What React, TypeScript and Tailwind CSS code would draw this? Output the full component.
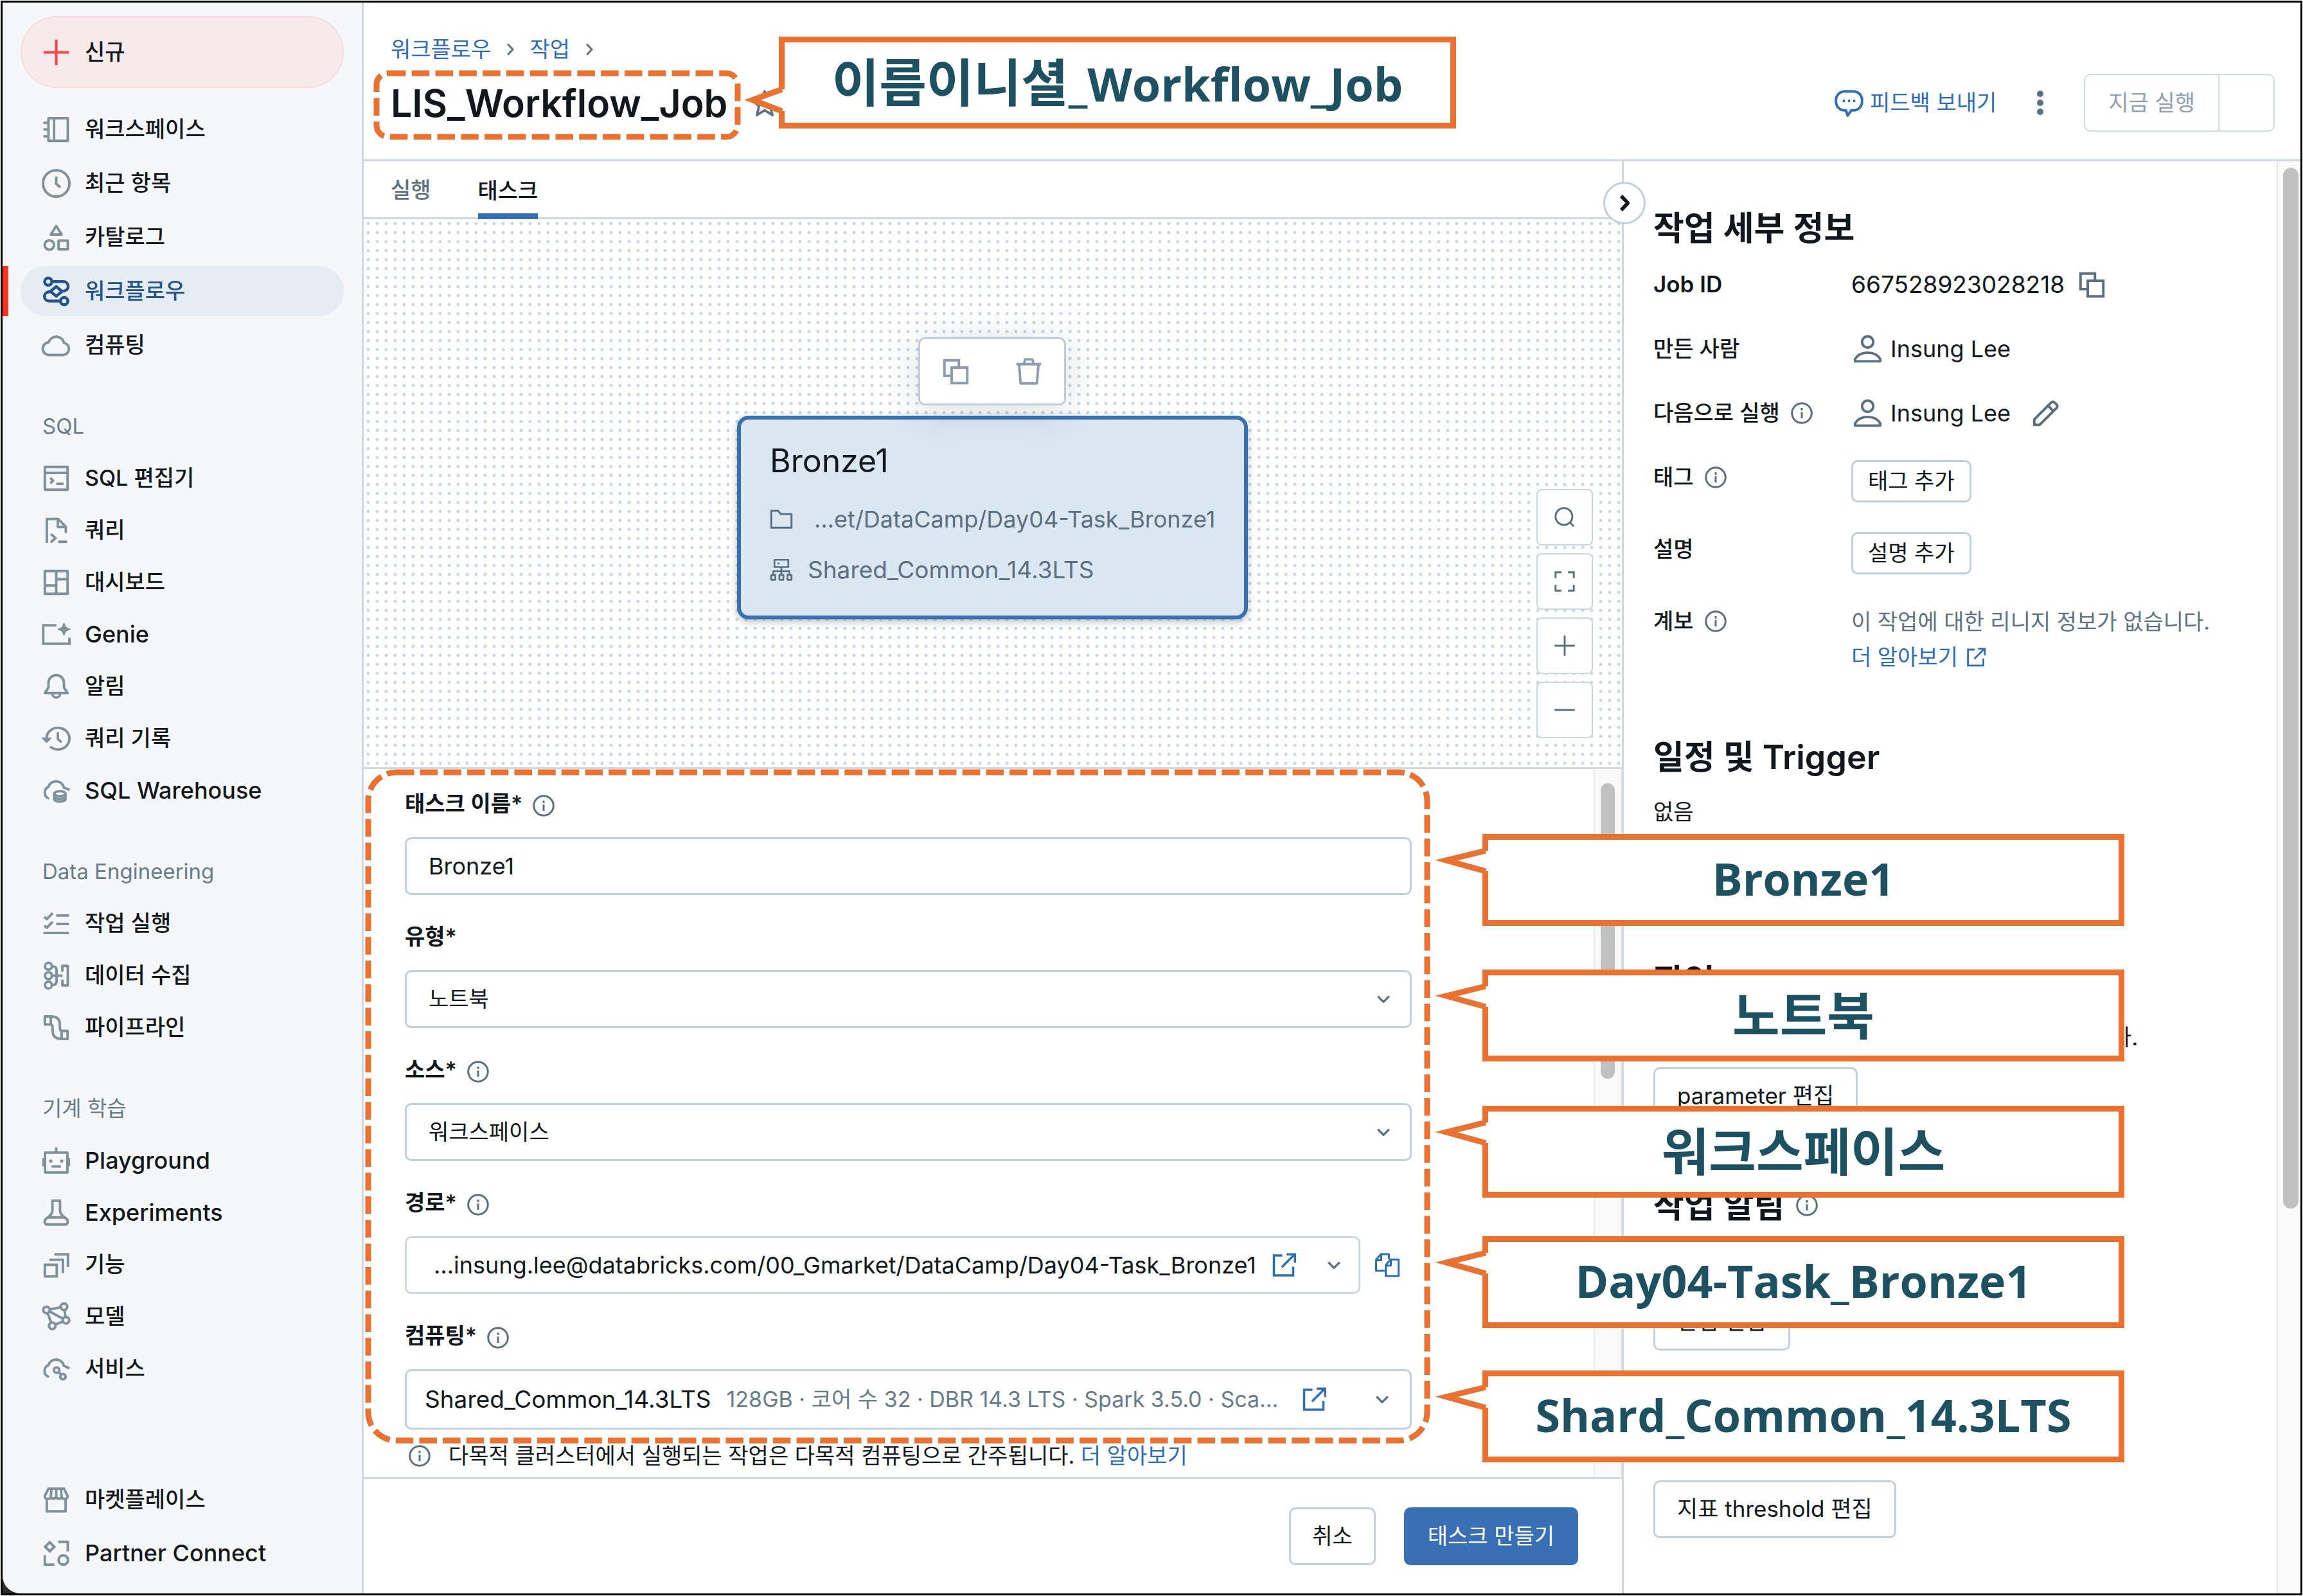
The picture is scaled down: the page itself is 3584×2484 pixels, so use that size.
import React from "react";

type IconProps = { children: React.ReactNode; className?: string; width?: number };

function Icon({ children, className = "size-[45px]", width = 1.4 }: IconProps) {
  return (
    <svg
      viewBox="0 0 16 16"
      fill="none"
      stroke="currentColor"
      strokeWidth={width}
      strokeLinejoin="round"
      aria-hidden="true"
      className={`${className} shrink-0 overflow-visible`}
    >
      {children}
    </svg>
  );
}

const icons = {
  notebook: (
    <>
      <path d="M3.7 1.8h10.7v12.5H3.7zM6.8 1.8v12.5M.9 4.3h2.8M.9 8h2.8M.9 11.8h2.8" />
    </>
  ),
  clock: (
    <>
      <circle cx="8" cy="8" r="7.3" />
      <path d="M8 4.2v4l2.3 2" />
    </>
  ),
  catalog: (
    <>
      <path d="M8 1.7 5 6.4h6zM9.3 9.8h5.1v4.8H9.3z" />
      <circle cx="4.2" cy="12.2" r="2.6" />
    </>
  ),
  workflow: (
    <g strokeWidth="1.6">
      <circle cx="3.6" cy="2.6" r="2" />
      <circle cx="12.4" cy="13.4" r="2" />
      <path d="M5.6 2.6h6.3a2.6 2.6 0 0 1 .8 5.1L11.2 8 8 10.7 4.8 8 8 5.3 11.2 8M4.8 8l-1.5.4a2.5 2.5 0 0 0 .8 4.9h6.3" />
    </g>
  ),
  cloud: <path d="M4.3 13.3a3.5 3.5 0 0 1-.5-7 4.4 4.4 0 0 1 8.5.3 3.4 3.4 0 0 1-.2 6.7z" />,
  editor: (
    <>
      <path d="M1.7 1.7h12.6v12.6H1.7zM1.7 5h12.6M8 11h4" />
      <path d="m4.7 7.8 1.6 1.5-1.6 1.5" />
    </>
  ),
  query: (
    <path d="M2.8 14.9V1.7h6.3L13.3 6v3.4M8.9 1.7v4.4h4.4M5 10l2.6 2.3L5 14.6M9.1 14.3h4.9" />
  ),
  dashboard: <path d="M1.7 1.7h12.6v12.6H1.7zM8 1.7v12.6M1.7 9.7H8M8 6.2h6.3" />,
  genie: (
    <>
      <path d="M8.1 2.9H.8v10.2h14.5V9.8" strokeLinejoin="miter" />
      <path
        d="M12.3 1.9c.5 2 1.2 2.7 3.2 3.2-2 .5-2.7 1.2-3.2 3.2-.5-2-1.2-2.7-3.2-3.2 2-.5 2.7-1.2 3.2-3.2z"
        fill="currentColor"
        strokeWidth=".7"
      />
    </>
  ),
  bell: (
    <path d="M1.7 11.6h12.6l-2-3V6a4.3 4.3 0 0 0-8.6 0v2.6zM5.9 11.9a2.1 2.2 0 0 0 4.2 0" />
  ),
  history: (
    <>
      <path d="M2.6 8a6.35 6 0 1 1 2 4.4M8.9 4.4v3.8l2 1.9" />
      <path d="M.2 7.7h5L2.7 10.1z" fill="currentColor" strokeWidth=".6" />
    </>
  ),
  warehouse: (
    <>
      <path d="M4 12.4a3.5 3.5 0 0 1-.3-6.5 4.4 4.4 0 0 1 8.5.4l3.2 1.3" />
      <ellipse cx="10" cy="9.7" rx="3.1" ry="1.4" />
      <path d="M6.9 9.7v3c0 .8 1.4 1.4 3.1 1.4s3.1-.6 3.1-1.4v-3M6.9 11.2c0 .8 1.4 1.4 3.1 1.4s3.1-.6 3.1-1.4" />
    </>
  ),
  checklist: (
    <path d="M8 3.5h7.1M8 8.2h7.1M.9 13.2h14.2M1.4 4.3l1.4 1.2L6 2.2M1.4 9.1l1.4 1.2L6 7" />
  ),
  ingest: (
    <>
      <circle cx="3.7" cy="2.8" r="1.9" />
      <circle cx="3.7" cy="8" r="1.9" />
      <circle cx="3.7" cy="13.2" r="1.9" />
      <path d="M5.6 2.8c1.9 0 2.6.8 2.6 2v6.4c0 1.2-.7 2-2.6 2M5.6 8h5.9M11.4 5.8V2.6h3v10.8h-3v-3.2" />
    </>
  ),
  pipeline: (
    <path d="M1.7 1.8H5v4.4H1.7zM11 9.8h3.3v4.4H11zM5 1.8c3.4 0 5 1.5 5 4.4 0 2.3 0 3.6 1.3 3.6M5 6.2c1 0 1 1.3 1 3.4 0 3 1.6 4.6 5 4.6" />
  ),
  robot: (
    <>
      <path d="M1.8 3.5h12.4v11H1.8zM8 .6v2.9M1 6.6v4.5M15 6.6v4.5M5.4 11.2h5.2" />
      <circle cx="5" cy="8.2" r=".5" fill="currentColor" strokeWidth=".9" />
      <circle cx="11" cy="8.2" r=".5" fill="currentColor" strokeWidth=".9" />
    </>
  ),
  flask: (
    <path d="M5.3 1.3h5.4M5.9 1.3v5.3c0 1-.6 2.3-1.5 3.1l-2.1 1.8c-1.4 1.2-.5 3 .8 3h9.8c1.3 0 2.2-1.8.8-3l-2.1-1.8c-.9-.8-1.5-2.1-1.5-3.1V1.3M3.6 10.6h8.8" />
  ),
  features: (
    <path d="M1.7 8h6.6v6.4H1.7zM4.2 5.2h7.5v7.4M7 2.2h7.5v7" strokeLinejoin="miter" />
  ),
  models: (
    <>
      <circle cx="2.6" cy="4.2" r="1.8" />
      <circle cx="12.3" cy="2.4" r="1.8" />
      <circle cx="13.4" cy="9.9" r="1.8" />
      <circle cx="5.8" cy="13" r="1.8" />
      <path d="m4.4 3.9 6.1-1.2M12.6 4.2l.5 3.9M11.6 10.6l-4.2 1.7M5.3 11.3 3.2 6M4.2 5l7.6 4.1" />
    </>
  ),
  serving: (
    <>
      <path d="M4 12.5a3.5 3.5 0 0 1-.3-6.6 4.4 4.4 0 0 1 8.5.4l3.2 1.4" />
      <circle cx="8.2" cy="8.7" r="1.5" />
      <circle cx="11.7" cy="12.3" r="1.5" />
      <path d="m9.3 9.8 1.3 1.4" />
    </>
  ),
  market: (
    <path d="M3.7 1.8h8.6l2 3.9v.7a1.8 1.8 0 0 1-3.3 0 1.7 1.7 0 0 1-3 0 1.7 1.7 0 0 1-3 0 1.8 1.8 0 0 1-3.3 0v-.7zM5.4 1.8 5 6.4M8 1.8v4.6M10.6 1.8l.4 4.6M2.8 8v6.3h10.4V8" />
  ),
  partner: (
    <>
      <path d="m4.4 1.9 2.5 2.5-2.5 2.5-2.5-2.5zM9.1 1.7h5.3v5.2M1.7 9v5.3H7" strokeLinejoin="miter" />
      <circle cx="11.9" cy="11.7" r="2.6" />
    </>
  ),
  copy: <path d="M9.7 5.2V1.7h-8v8.6h3.5M5.7 5.7h8.6v8.6H5.7z" strokeLinejoin="miter" />,
  trash: <path d="M1 3.9h14M5.3 3.9l.6-2.7h4.2l.6 2.7M2.5 3.9l.9 10.9h9.2l.9-10.9" />,
  user: (
    <>
      <circle cx="8" cy="4" r="3.1" />
      <path d="M1 14.7v-1.2c1.4-2.4 4-3.6 7-3.6s5.6 1.2 7 3.6v1.2z" />
    </>
  ),
  pencil: <path d="M1.7 14.3v-3l9.4-9.4a1.3 1.3 0 0 1 1.8 0l1.2 1.2a1.3 1.3 0 0 1 0 1.8l-9.4 9.4zM9.3 3.7l3 3" />,
  info: (
    <>
      <circle cx="8" cy="8" r="7.2" />
      <path d="M8 7.2v4.6M8 4.2v1.8" />
    </>
  ),
  external: <path d="M7 2H1.8v12.4h12V9M6.7 9.3l8-8M9.7 1.3h5.2v5.2" strokeLinejoin="miter" />,
  chevronDown: <path d="m3 5.5 5 5 5-5" />,
  chevronRight: <path d="m5.5 2.5 5.2 5.5-5.2 5.5" />,
  search: (
    <>
      <circle cx="7.5" cy="7.5" r="5.8" />
      <path d="m11.7 11.7 2.6 2.6" />
    </>
  ),
  fit: <path d="M1.7 5.7v-4h4M10.3 1.7h4v4M14.3 10.3v4h-4M5.7 14.3h-4v-4" strokeLinejoin="miter" />,
  plus: <path d="M8 1v14M1 8h14" />,
  minus: <path d="M1 8h14" />,
  folder: <path d="M1 2.2h4.8l1.7 2.3H15v9.4H1z" strokeLinejoin="miter" />,
  cluster: (
    <path d="M3.2 1h9.6v5H3.2zM8 6v2.8M2.4 11.5V8.8h11.2v2.7M8 8.8v2.7M1 11.5h2.8v3.3H1zM6.6 11.5h2.8v3.3H6.6zM12.2 11.5H15v3.3h-2.8zM5.5 3.5h1.2" />
  ),
  speech: (
    <>
      <path d="M7.2 14.9 6.3 12H5.6A4.8 4.8 0 0 1 .8 7.2v-.9a4.8 4.8 0 0 1 4.8-4.8h4.8a4.8 4.8 0 0 1 4.8 4.8v.9a4.8 4.8 0 0 1-4.8 4.8H9.3z" />
      <path d="M4.5 6.8h1.2M7.4 6.8h1.2M10.3 6.8h1.2" />
    </>
  ),
  copies: (
    <path d="M6.5 11.5H1V4.7l3-3.5h5v3M1.2 5h3V1.2M7 8l3-3.5h5v10.3H7zM7.2 8.3h3V4.5" />
  ),
};

type NavItem = { icon: keyof typeof icons; label: string; active?: boolean; latin?: boolean };

const topItems: NavItem[] = [
  { icon: "notebook", label: "워크스페이스" },
  { icon: "clock", label: "최근 항목" },
  { icon: "catalog", label: "카탈로그" },
  { icon: "workflow", label: "워크플로우", active: true },
  { icon: "cloud", label: "컴퓨팅" },
];

const sections: { title: string; items: NavItem[] }[] = [
  {
    title: "SQL",
    items: [
      { icon: "editor", label: "SQL 편집기" },
      { icon: "query", label: "쿼리" },
      { icon: "dashboard", label: "대시보드" },
      { icon: "genie", label: "Genie", latin: true },
      { icon: "bell", label: "알림" },
      { icon: "history", label: "쿼리 기록" },
      { icon: "warehouse", label: "SQL Warehouse", latin: true },
    ],
  },
  {
    title: "Data Engineering",
    items: [
      { icon: "checklist", label: "작업 실행" },
      { icon: "ingest", label: "데이터 수집" },
      { icon: "pipeline", label: "파이프라인" },
    ],
  },
  {
    title: "기계 학습",
    items: [
      { icon: "robot", label: "Playground", latin: true },
      { icon: "flask", label: "Experiments", latin: true },
      { icon: "features", label: "기능" },
      { icon: "models", label: "모델" },
      { icon: "serving", label: "서비스" },
    ],
  },
];

const bottomItems: NavItem[] = [
  { icon: "market", label: "마켓플레이스" },
  { icon: "partner", label: "Partner Connect", latin: true },
];

function NavLink({ icon, label, active, latin }: NavItem) {
  return (
    <li className="relative px-7">
      {active && <span className="absolute inset-y-0 left-0 w-[9px] bg-[#f03522]" />}
      <a
        href="#"
        className={
          active
            ? "flex h-[78px] items-center gap-[22px] rounded-full bg-[#e5ecf3] px-[33px] font-medium text-[#24528c]"
            : "flex h-[78px] items-center gap-[22px] rounded-full px-[33px] font-medium"
        }
      >
        <span className={active ? "" : "text-[#80919e]"}>
          <Icon>{icons[icon]}</Icon>
        </span>
        <span className={latin ? "text-[36px]" : ""}>{label}</span>
      </a>
    </li>
  );
}

function Sidebar() {
  return (
    <nav className="flex w-[562px] shrink-0 flex-col border-r-[3px] border-[#cfd8e3] bg-[#f6f7f9] pt-[21px] pb-6">
      <div className="px-7">
        <button className="flex h-28 w-full items-center gap-[22px] rounded-full border-2 border-[#f8dcde] bg-[#f7eaea] px-[31px] font-medium">
          <span className="text-[#f24848]">
            <Icon width={1.5}>{icons.plus}</Icon>
          </span>
          신규
        </button>
      </div>
      <ul className="mt-[25px] flex flex-col gap-1.5">
        {topItems.map((item) => (
          <NavLink key={item.label} {...item} />
        ))}
      </ul>
      {sections.map((section) => (
        <section key={section.title} className="mt-16">
          <h2 className="mb-[17px] flex h-12 items-center pl-[62px] text-[33px] text-[#667c8c]">
            {section.title}
          </h2>
          <ul className="flex flex-col gap-[3px]">
            {section.items.map((item) => (
              <NavLink key={item.label} {...item} />
            ))}
          </ul>
        </section>
      ))}
      <ul className="mt-auto flex flex-col gap-[5px]">
        {bottomItems.map((item) => (
          <NavLink key={item.label} {...item} />
        ))}
      </ul>
    </nav>
  );
}

function Header() {
  return (
    <header className="flex h-[247px] shrink-0 items-center justify-between border-b-[3px] border-[#cfd8e3] pr-10 pl-[42px]">
      <div className="pt-1">
        <div className="flex h-12 items-center gap-[18px] text-[#2f6db5]">
          <a href="#">워크플로우</a>
          <span className="text-[#5f7281]">
            <Icon className="size-6" width={2}>{icons.chevronRight}</Icon>
          </span>
          <a href="#">작업</a>
          <span className="text-[#5f7281]">
            <Icon className="size-6" width={2}>{icons.chevronRight}</Icon>
          </span>
        </div>
        <div className="mt-[18px] flex h-[84px] items-center gap-9">
          <h1 className="text-[59px] font-semibold">LIS_Workflow_Job</h1>
          <button aria-label="즐겨찾기" className="text-[#5f7281]">
            <Icon className="size-11">
              <path d="m8 1.2 2 4.7 5 .4-3.8 3.3 1.2 5L8 11.9l-4.4 2.7 1.2-5L1 6.3l5-.4z" />
            </Icon>
          </button>
        </div>
      </div>
      <div className="flex items-center pt-[68px]">
        <a href="#" className="flex items-center gap-2.5 text-[#2f6db5]">
          <Icon>{icons.speech}</Icon>
          피드백 보내기
        </a>
        <button aria-label="더 보기" className="ml-12 flex h-16 w-10 items-center justify-center text-[#5b6f80]">
          <svg viewBox="0 0 12 40" className="h-10 w-3" fill="currentColor" aria-hidden="true">
            <circle cx="6" cy="6" r="5" />
            <circle cx="6" cy="20" r="5" />
            <circle cx="6" cy="34" r="5" />
          </svg>
        </button>
        <div className="ml-12 flex">
          <button disabled className="h-[90px] rounded-l-[10px] border-2 border-r-0 border-[#cfdae5] px-9 text-[#8f9fae]">
            지금 실행
          </button>
          <button disabled aria-label="실행 옵션" className="h-[90px] w-[88px] rounded-r-[10px] border-2 border-[#cfdae5]" />
        </div>
      </div>
    </header>
  );
}

function Canvas() {
  return (
    <div className="relative h-[856px] shrink-0 border-b-[3px] border-[#cfd8e3] bg-[radial-gradient(circle,#cdd7e3_2px,transparent_3px)] [background-size:14px_14px]">
      <div className="absolute top-[184px] left-[863px] z-10 flex h-[106px] w-[230px] items-center justify-between rounded-[10px] border-[3px] border-[#bfcddb] bg-white px-[33px] text-[#8b9dae] shadow-[0_8px_60px_rgba(27,49,57,0.16)]">
        <button aria-label="작업 복제">
          <Icon>{icons.copy}</Icon>
        </button>
        <button aria-label="작업 삭제">
          <Icon className="size-11">{icons.trash}</Icon>
        </button>
      </div>
      <article className="absolute top-[306px] left-[581px] h-[317px] w-[795px] rounded-[18px] border-[6px] border-[#3970b4] bg-[#dbe8f3] pl-[45px] shadow-[0_4px_12px_rgba(27,49,57,0.3)]">
        <h2 className="mt-8 flex h-16 items-center text-[50px]">Bronze1</h2>
        <p className="mt-[35px] flex h-12 items-center gap-[33px] text-[36px] text-[#5b6f80]">
          <Icon className="size-9" width={1.3}>{icons.folder}</Icon>…et/DataCamp/Day04-Task_Bronze1
        </p>
        <p className="mt-[31px] flex h-12 items-center gap-[23px] text-[37px] text-[#5b6f80]">
          <Icon className="size-9" width={1.2}>{icons.cluster}</Icon>
          Shared_Common_14.3LTS
        </p>
      </article>
      <div className="absolute top-[420px] right-[45px] flex flex-col gap-3 text-[#5b6f80]">
        <button aria-label="검색" className="flex size-[88px] items-center justify-center rounded-lg border-2 border-[#ccd6e0] bg-white">
          <Icon className="size-9" width={1.3}>{icons.search}</Icon>
        </button>
        <button aria-label="화면에 맞춤" className="flex size-[88px] items-center justify-center rounded-lg border-2 border-[#ccd6e0] bg-white">
          <Icon className="size-9" width={1.3}>{icons.fit}</Icon>
        </button>
        <button aria-label="확대" className="flex size-[88px] items-center justify-center rounded-lg border-2 border-[#ccd6e0] bg-white">
          <Icon className="size-9" width={1.3}>{icons.plus}</Icon>
        </button>
        <button aria-label="축소" className="flex size-[88px] items-center justify-center rounded-lg border-2 border-[#ccd6e0] bg-white">
          <Icon className="size-9" width={1.3}>{icons.minus}</Icon>
        </button>
      </div>
    </div>
  );
}

function Info() {
  return (
    <span className="text-[#5b6f80]">
      <Icon className="size-[34px]">{icons.info}</Icon>
    </span>
  );
}

function FieldLabel({ id, text, info }: { id: string; text: string; info?: boolean }) {
  return (
    <div className="mb-7 flex h-12 items-center gap-4">
      <label htmlFor={id} className="font-semibold">
        {text}
      </label>
      {info && (
        <span className="pt-1.5">
          <Info />
        </span>
      )}
    </div>
  );
}

function SelectField({ id, text, info, value }: { id: string; text: string; info?: boolean; value: string }) {
  return (
    <div>
      <FieldLabel id={id} text={text} info={info} />
      <div className="relative">
        <select
          id={id}
          className="h-[90px] w-full appearance-none rounded-[10px] border-[3px] border-[#c2cfdc] bg-white px-[34px]"
        >
          <option>{value}</option>
        </select>
        <span className="pointer-events-none absolute inset-y-0 right-[30px] flex items-center text-[#5b6f80]">
          <Icon className="size-7" width={2}>{icons.chevronDown}</Icon>
        </span>
      </div>
    </div>
  );
}

function TaskForm() {
  return (
    <form className="flex min-h-0 flex-1 flex-col">
      <div className="flex min-h-0 flex-1 overflow-hidden">
        <div className="min-w-0 flex-1 pt-[30px] pl-16">
          <div className="flex max-w-[1567px] flex-col gap-[41px]">
            <div>
              <FieldLabel id="task-name" text="태스크 이름*" info />
              <input
                id="task-name"
                defaultValue="Bronze1"
                className="h-[90px] w-full rounded-[10px] border-[3px] border-[#c2cfdc] px-[34px] text-[36px]"
              />
            </div>
            <SelectField id="task-type" text="유형*" value="노트북" />
            <SelectField id="task-source" text="소스*" info value="워크스페이스" />
            <div>
              <FieldLabel id="task-path" text="경로*" info />
              <div className="flex items-center gap-[22px]">
                <div className="flex h-[90px] min-w-0 flex-1 items-center rounded-[10px] border-[3px] border-[#cfd9e3] pr-6 pl-[42px]">
                  <input
                    id="task-path"
                    defaultValue="…insung.lee@databricks.com/00_Gmarket/DataCamp/Day04-Task_Bronze1"
                    className="min-w-0 flex-1 text-[36px]"
                  />
                  <a href="#" aria-label="노트북 열기" className="mr-11 text-[#2f6db5]">
                    <Icon className="size-10">{icons.external}</Icon>
                  </a>
                  <span className="text-[#5b6f80]">
                    <Icon className="size-7" width={2}>{icons.chevronDown}</Icon>
                  </span>
                </div>
                <button type="button" aria-label="경로 복사" className="mr-[18px] text-[#2f6db5]">
                  <Icon className="size-10" width={1.2}>{icons.copies}</Icon>
                </button>
              </div>
            </div>
            <div>
              <FieldLabel id="task-compute" text="컴퓨팅*" info />
              <div className="flex h-[94px] items-center rounded-[10px] border-[3px] border-[#c2cfdc] pr-[29px] pl-7">
                <button
                  type="button"
                  id="task-compute"
                  className="flex min-w-0 flex-1 items-center gap-6 text-left text-[37px]"
                >
                  Shared_Common_14.3LTS
                  <span className="text-[34px] text-[#667c8c]">
                    128GB · 코어 수 32 · DBR 14.3 LTS · Spark 3.5.0 · Sca…
                  </span>
                </button>
                <a href="#" aria-label="컴퓨팅 열기" className="mr-[72px] text-[#2f6db5]">
                  <Icon className="size-10">{icons.external}</Icon>
                </a>
                <span className="text-[#5b6f80]">
                  <Icon className="size-7" width={2}>{icons.chevronDown}</Icon>
                </span>
              </div>
              <p className="mt-[17px] flex h-12 items-center pl-1.5">
                <Info />
                <span className="ml-7">
                  다목적 클러스터에서 실행되는 작업은 다목적 컴퓨팅으로 간주됩니다.{" "}
                  <a href="#" className="text-[#2f6db5]">더 알아보기</a>
                </span>
              </p>
            </div>
          </div>
        </div>
        <div className="w-11 shrink-0 border-x-2 border-[#e8e8e8] bg-[#fafafa] px-2 pt-[22px]">
          <div className="mx-auto h-[460px] w-[22px] rounded-full bg-[#c1c1c1]" />
        </div>
      </div>
      <div className="flex h-[181px] shrink-0 items-center justify-end gap-11 border-t-[3px] border-[#cfd8e3] pr-[68px]">
        <button type="button" className="h-[90px] rounded-[10px] border-[3px] border-[#c2cfdc] px-[33px]">
          취소
        </button>
        <button type="submit" className="h-[90px] rounded-[10px] bg-[#3970b4] px-[37px] text-white">
          태스크 만들기
        </button>
      </div>
    </form>
  );
}

function DetailRow({ label, info, children }: { label: React.ReactNode; info?: boolean; children: React.ReactNode }) {
  return (
    <div className="grid grid-cols-[308px_1fr] items-start">
      <dt className="flex h-[54px] items-center gap-[17px] font-medium">
        {label}
        {info && <Info />}
      </dt>
      <dd className="flex min-h-[54px] items-center">{children}</dd>
    </div>
  );
}

function PanelHeading({ children }: { children: React.ReactNode }) {
  return <h2 className="flex h-16 items-center gap-[18px] text-[52px] font-semibold">{children}</h2>;
}

function PanelButton({ children }: { children: React.ReactNode }) {
  return (
    <button className="block h-[90px] rounded-[10px] border-[3px] border-[#c2cfdc] bg-white px-[34px] text-[35px]">
      {children}
    </button>
  );
}

function DetailsPanel() {
  return (
    <aside className="relative flex w-[1056px] shrink-0 border-l-[3px] border-[#cfd8e3]">
      <button
        aria-label="패널 접기"
        className="absolute top-8 -left-8 z-10 flex size-[66px] items-center justify-center rounded-full border-[3px] border-[#c2cfdc] bg-white"
      >
        <Icon className="size-8" width={2.8}>{icons.chevronRight}</Icon>
      </button>
      <div className="min-w-0 flex-1 pt-[72px] pl-[46px]">
        <PanelHeading>작업 세부 정보</PanelHeading>
        <dl className="mt-[29px] flex flex-col gap-[46px]">
          <DetailRow label={<span className="text-[35px] font-semibold">Job ID</span>}>
            <span className="text-[37px]">667528923028218</span>
            <button aria-label="Job ID 복사" className="ml-5 text-[#5b6f80]">
              <Icon>{icons.copy}</Icon>
            </button>
          </DetailRow>
          <DetailRow label="만든 사람">
            <span className="mr-[13px] ml-[3px] text-[#5b6f80]">
              <Icon>{icons.user}</Icon>
            </span>
            <span className="text-[36px]">Insung Lee</span>
          </DetailRow>
          <DetailRow label="다음으로 실행" info>
            <span className="mr-[13px] ml-[3px] text-[#5b6f80]">
              <Icon>{icons.user}</Icon>
            </span>
            <span className="text-[36px]">Insung Lee</span>
            <button aria-label="실행 사용자 편집" className="ml-8 text-[#5b6f80]">
              <Icon>{icons.pencil}</Icon>
            </button>
          </DetailRow>
          <DetailRow label="태그" info>
            <button className="h-[66px] rounded-[10px] border-[3px] border-[#c2cfdc] px-[23px]">태그 추가</button>
          </DetailRow>
          <DetailRow label="설명">
            <button className="h-[66px] rounded-[10px] border-[3px] border-[#c2cfdc] px-[23px]">설명 추가</button>
          </DetailRow>
          <DetailRow label="계보" info>
            <div className="leading-[55px] text-[#5f7281]">
              이 작업에 대한 리니지 정보가 없습니다.
              <a href="#" className="flex items-center gap-3 text-[#2f6db5]">
                더 알아보기
                <Icon className="size-8">{icons.external}</Icon>
              </a>
            </div>
          </DetailRow>
        </dl>

        <section className="mt-24 h-[349px]">
          <PanelHeading>일정 및 Trigger</PanelHeading>
          <p className="mt-7 flex h-[52px] items-center">없음</p>
        </section>

        <section>
          <PanelHeading>작업 parameter</PanelHeading>
          <p className="mt-[30px] mb-5 flex h-[52px] items-center text-[35px]">
            이 작업에 대해 정의된 작업 parameter가 없습니다.
          </p>
          <PanelButton>parameter 편집</PanelButton>
        </section>

        <section className="mt-[93px]">
          <PanelHeading>
            작업 알림 <Info />
          </PanelHeading>
          <div className="mt-[104px]">
            <PanelButton>알림 편집</PanelButton>
          </div>
        </section>

        <div className="mt-[202px]">
          <PanelButton>지표 threshold 편집</PanelButton>
        </div>
      </div>
      <div className="w-[37px] shrink-0 border-l-2 border-[#e8e8e8] bg-[#fafafa] pt-2.5">
        <div className="ml-2 h-[1620px] w-6 rounded-full bg-[#c1c1c1]" />
      </div>
    </aside>
  );
}

/* Speech-bubble annotation: bordered box with a tail that points left. */
function Callout({ className, children }: { className: string; children: React.ReactNode }) {
  return (
    <div
      className={`${className} absolute flex h-[143px] items-center justify-center border-[9px] border-[#e97132] bg-white pb-1 font-['Open_Sans','Noto_Sans_CJK_KR',sans-serif] font-bold text-[#1d5162]`}
    >
      {children}
    </div>
  );
}

function Tail({ wide }: { wide?: boolean }) {
  return wide ? (
    <svg viewBox="0 0 81 60" className="absolute top-[10px] -left-[81px] h-[60px] w-[81px] overflow-visible" aria-hidden="true">
      <path d="M82 7 77 7 20 22 77 39h5z" fill="white" />
      <path d="M77 7 16 22 77 39" fill="none" stroke="#e97132" strokeWidth="9" strokeMiterlimit="10" />
    </svg>
  ) : (
    <svg viewBox="0 0 64 60" className="absolute top-[62px] -left-[64px] h-[60px] w-[64px] overflow-visible" aria-hidden="true">
      <path d="M65 11h-5L14 27.5 60 45h5z" fill="white" />
      <path d="M60 11 14 27.5 60 45" fill="none" stroke="#e97132" strokeWidth="9" strokeMiterlimit="10" />
    </svg>
  );
}

function Annotations() {
  return (
    <div className="pointer-events-none absolute inset-0 z-20">
      <svg className="absolute top-[109px] left-[581px] h-[109px] w-[572px]" aria-hidden="true">
        <rect x="5" y="5" width="562" height="99" rx="18" fill="none" stroke="#e97132" strokeWidth="9" strokeDasharray="27.5 9.3" />
      </svg>
      <svg className="absolute top-[1197px] left-[568px] h-[1052px] w-[1659px]" aria-hidden="true">
        <rect x="5" y="5" width="1648" height="1040" rx="44" fill="none" stroke="#e97132" strokeWidth="9" strokeDasharray="27.5 9.2" />
      </svg>
      <Callout className="top-[57px] left-[1212px] w-[1054px] text-[72px]">
        <Tail />
        <p>
          <span className="text-[80px]">이름이니셜</span>_Workflow_Job
        </p>
      </Callout>
      <Callout className="top-[1298px] left-[2307px] w-[999px] text-[70px]">
        <Tail wide />
        Bronze1
      </Callout>
      <Callout className="top-[1509px] left-[2307px] w-[999px] text-[80px]">
        <Tail wide />
        노트북
      </Callout>
      <Callout className="top-[1721px] left-[2307px] w-[999px] text-[80px]">
        <Tail wide />
        워크스페이스
      </Callout>
      <Callout className="top-[1924px] left-[2307px] w-[999px] text-[70px]">
        <Tail wide />
        Day04-Task_Bronze1
      </Callout>
      <Callout className="top-[2133px] left-[2307px] w-[999px] text-[70px]">
        <Tail wide />
        Shard_Common_14.3LTS
      </Callout>
    </div>
  );
}

export default function App() {
  return (
    <div className="relative flex min-h-screen bg-white p-px font-['Inter','Noto_Sans_CJK_KR',sans-serif] text-[34px] leading-tight text-[#11171c]">
      <div className="flex min-w-0 flex-1 overflow-hidden border-[3px] border-black bg-[#2b2b2b]">
        <div className="flex min-w-0 flex-1 overflow-hidden rounded-bl-[28px] bg-white">
          <Sidebar />
          <div className="flex min-w-0 flex-1 flex-col">
            <Header />
            <div className="flex min-h-0 flex-1">
              <main className="flex min-w-0 flex-1 flex-col">
                <div className="flex h-[90px] shrink-0 items-stretch gap-[73px] border-b-[3px] border-[#cfd8e3] pl-[42px] font-medium">
                  <button className="pt-1 text-[#5f7281]">실행</button>
                  <button className="-mb-[3px] border-b-[9px] border-[#3970b4] pt-[11px]">태스크</button>
                </div>
                <Canvas />
                <TaskForm />
              </main>
              <DetailsPanel />
            </div>
          </div>
        </div>
      </div>
      <Annotations />
    </div>
  );
}
